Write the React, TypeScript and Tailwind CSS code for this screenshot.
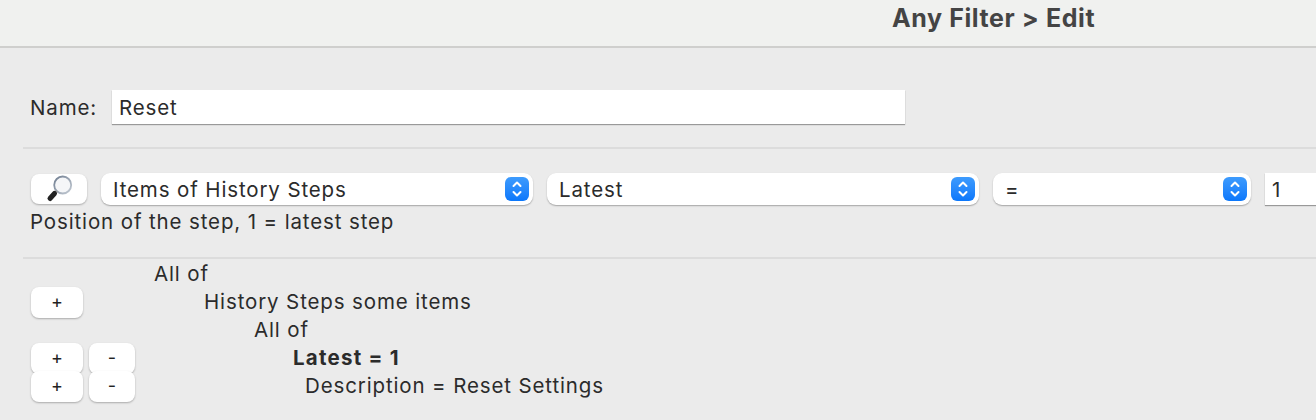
import { ReactNode } from "react";

function Stepper() {
  return (
    <span className="flex h-6 w-6 shrink-0 items-center justify-center rounded-[6px] bg-gradient-to-b from-[#3d9bfd] to-[#0a77fb]">
      <svg width="12" height="18" viewBox="0 0 12 18" fill="none" stroke="#fff" strokeWidth="2" strokeLinecap="round" strokeLinejoin="round">
        <path d="M2.5 6 L6 2.5 L9.5 6" />
        <path d="M2.5 12 L6 15.5 L9.5 12" />
      </svg>
    </span>
  );
}

function Select({ label, width }: { label: string; width: string }) {
  return (
    <div className={`${width} flex h-8 shrink-0 items-center justify-between rounded-[9px] bg-white pl-[12px] pr-1 shadow-[0_1px_1.5px_rgba(0,0,0,0.3)]`}>
      <span className="pt-[2px]">{label}</span>
      <Stepper />
    </div>
  );
}

function SmallButton({ label, width }: { label: string; width: string }) {
  return (
    <button className={`${width} flex h-[31px] shrink-0 items-center justify-center rounded-[8px] bg-white text-[18px] leading-none tracking-normal text-[#222] shadow-[0_1px_2px_rgba(0,0,0,0.28)]`}>
      {label}
    </button>
  );
}

function TreeRow({ plus, minus, indent, bold, children }: { plus?: boolean; minus?: boolean; indent: string; bold?: boolean; children: ReactNode }) {
  return (
    <div className="flex h-7 items-center">
      <div className="flex w-[154px] shrink-0 items-center gap-[6px] pl-[31px]">
        {plus && <SmallButton label="+" width="w-[52px]" />}
        {minus && <SmallButton label="-" width="w-[46px]" />}
      </div>
      <span className={`${indent} ${bold ? "font-bold tracking-[1.25px]" : ""}`}>{children}</span>
    </div>
  );
}

export default function App() {
  return (
    <div className="h-[420px] w-[1316px] overflow-hidden bg-[#ebebeb] font-['Inter',sans-serif] text-[20.5px] leading-7 tracking-[0.87px] text-[#2b2b2b]">
      <header className="flex h-12 items-start border-b-2 border-[#cfcfcd] bg-[#f0f1ef] pl-[892px] pt-[4px]">
        <h1 className="text-[25px] font-bold leading-7 tracking-[0.6px] text-[#444]">Any Filter &gt; Edit</h1>
      </header>

      <section className="ml-[23px]">
        <div className="flex h-[99px] items-center pl-[7px] pt-[19px]">
          <label className="w-[82px] shrink-0 pt-[2px]">Name:</label>
          <div className="flex h-[34px] w-[793px] items-center bg-white pl-[7px] pt-[2px] shadow-[0_1px_1px_rgba(0,0,0,0.35)]">Reset</div>
        </div>

        <div className="border-t-2 border-[#dcdcdc] pl-2 pt-[24px]">
          <div className="flex items-center gap-[14px]">
            <button className="flex h-[30px] w-[56px] shrink-0 items-center justify-center rounded-[8px] bg-white shadow-[0_1px_2px_rgba(0,0,0,0.28)]">
              <svg width="32" height="30" viewBox="0 0 32 30" fill="none">
                <defs>
                  <linearGradient id="lens" x1="0" y1="0" x2="1" y2="1">
                    <stop offset="0" stopColor="#6f7d90" />
                    <stop offset="1" stopColor="#c4cbd4" />
                  </linearGradient>
                </defs>
                <circle cx="19.7" cy="11" r="8.5" fill="#f5f6f8" stroke="url(#lens)" strokeWidth="1.8" />
                <path d="M14 17 L12 19" stroke="#9a9a9a" strokeWidth="2.5" />
                <path d="M11.5 19.5 L7 24.5" stroke="#222" strokeWidth="5" strokeLinecap="round" />
              </svg>
            </button>
            <Select label="Items of History Steps" width="w-[432px]" />
            <Select label="Latest" width="w-[432px]" />
            <Select label="=" width="w-[258px]" />
            <div className="flex h-8 w-[60px] shrink-0 items-center bg-white pl-[7px] pt-[2px] shadow-[0_1px_1px_rgba(0,0,0,0.35)]">1</div>
          </div>
          <p className="-ml-px mt-[3px] h-[49px]">Position of the step, 1 = latest step</p>
        </div>

        <div className="border-t-2 border-[#dcdcdc] pt-[1px]" />
      </section>

      <section>
        <TreeRow indent="pl-0">All of</TreeRow>
        <TreeRow plus indent="pl-[50px]">History Steps some items</TreeRow>
        <TreeRow indent="pl-[100px]">All of</TreeRow>
        <TreeRow plus minus indent="pl-[139px]" bold>Latest = 1</TreeRow>
        <TreeRow plus minus indent="pl-[151px]">Description = Reset Settings</TreeRow>
      </section>
    </div>
  );
}
